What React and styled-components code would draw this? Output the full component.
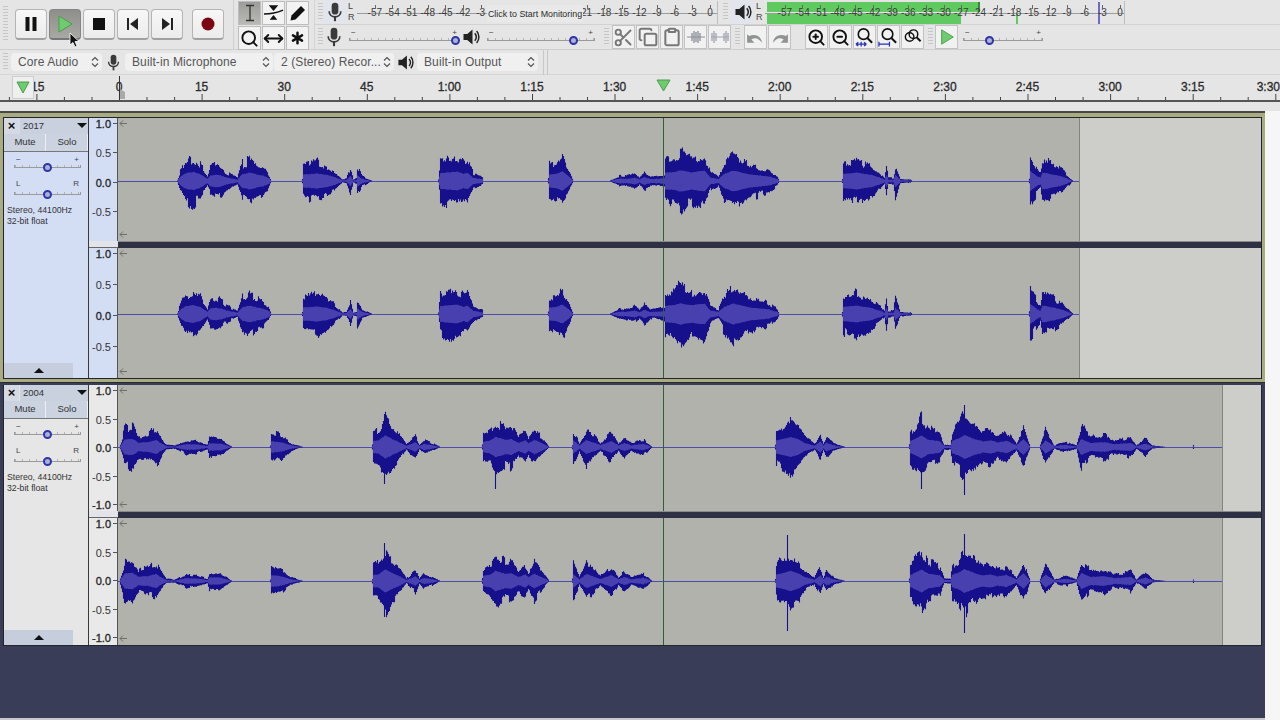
import styled, { createGlobalStyle } from "styled-components";
import { Scissors, Copy, Clipboard, Search, ZoomIn, ZoomOut, Asterisk, MoveHorizontal } from "lucide-react";

const GlobalStyle = createGlobalStyle`
  html, body { margin: 0; padding: 0; height: 100%; overflow: hidden; }
  body { background: #f6f6f6; font-family: "Liberation Sans", Arial, sans-serif; }
  #root { height: 100%; }
`;

const Window = styled.div`
  width: 1280px;
  height: 720px;
  display: flex;
  flex-direction: column;
  background: #e5e5e5;
  overflow: hidden;
`;

const TopBars = styled.div`
  display: flex;
  height: 50px;
  flex: none;
  border-bottom: 1px solid #cfcfcf;
  box-sizing: border-box;
`;

const Grip = styled.div`
  width: 5px;
  height: ${(p) => p.$h || 18}px;
  flex: none;
  margin: ${(p) => p.$m || "0"};
  background: repeating-linear-gradient(to bottom, #c6c6c6 0 1px, transparent 1px 3px);
`;

const TransportBar = styled.div`
  width: 234px;
  flex: none;
  box-sizing: border-box;
  display: flex;
  align-items: center;
  padding: 0 0 1px 3px;
  border-right: 1px solid #d0d0d0;
`;

const TransportBtn = styled.div`
  position: relative;
  width: 32px;
  height: 31px;
  flex: none;
  box-sizing: border-box;
  margin-right: ${(p) => p.$gap || 2}px;
  display: flex;
  align-items: center;
  justify-content: center;
  border-radius: 4px;
  border: 1px solid ${(p) => (p.$down ? "#858585" : "#b4b4b4")};
  border-bottom: 2px solid ${(p) => (p.$down ? "#777" : "#a0a0a0")};
  background: ${(p) =>
    p.$down ? "linear-gradient(#8e8e8a, #a8a8a4)" : "linear-gradient(#f7f7f7, #ececec)"};
`;

const MouseCursor = styled.svg`
  position: absolute;
  left: 19px;
  top: 22px;
  width: 11px;
  height: 16px;
  z-index: 5;
`;

const ToolsBar = styled.div`
  width: 80px;
  flex: none;
  box-sizing: border-box;
  display: grid;
  grid-template-columns: repeat(3, 23px);
  grid-auto-rows: 24px;
  gap: 1px;
  padding: 1px 0 0 4px;
`;

const ToolBtn = styled.div`
  box-sizing: border-box;
  display: flex;
  align-items: center;
  justify-content: center;
  border: 1px solid #bdbdbd;
  background: ${(p) => (p.$on ? "linear-gradient(#9c9c98, #b9b9b5)" : "#f3f3f3")};
`;

const BarStack = styled.div`
  flex: 1;
  display: flex;
  flex-direction: column;
  border-left: 1px solid #d4d4d4;
`;

const MeterRow = styled.div`
  display: flex;
  align-items: center;
  height: 25px;
  flex: none;
  border-bottom: 1px solid #d2d2d2;
  box-sizing: border-box;
`;

const MeterBtn = styled.div`
  width: 23px;
  height: 22px;
  flex: none;
  display: flex;
  align-items: center;
  justify-content: center;
  background: #e3e5ee;
  border-radius: 1px;
`;

const ChannelLetters = styled.div`
  width: 9px;
  flex: none;
  margin-left: 2px;
  font-size: 9px;
  line-height: 11px;
  color: #444;
`;

const MeterScale = styled.div`
  position: relative;
  display: flex;
  width: ${(p) => p.$w}px;
  height: 23px;
  flex: none;
  padding-left: ${(p) => p.$pad}px;
  box-sizing: border-box;
  border-right: 1px solid #bdbdbd;
  background: linear-gradient(#9c9c9c, #9c9c9c) 0 12px / 100% 1px no-repeat;
`;

const MeterFill = styled.div`
  position: absolute;
  left: 2px;
  top: ${(p) => p.$top}px;
  width: ${(p) => p.$w}px;
  height: 10px;
  background: #5fca5f;
  border-right: 2px solid ${(p) => (p.$edge ? "#2f8a2f" : "#5fca5f")};
`;

const PeakMark = styled.div`
  position: absolute;
  left: ${(p) => p.$x}px;
  top: ${(p) => p.$top}px;
  width: 1.5px;
  height: ${(p) => p.$h}px;
  background: ${(p) => p.$color};
`;

const MeterLabel = styled.div`
  position: relative;
  width: 17.65px;
  flex: none;
  text-align: center;
  font-size: 10px;
  line-height: 24px;
  color: #3c3c3c;
  &::before {
    content: "";
    position: absolute;
    left: 50%;
    top: 4px;
    width: 1px;
    height: 4px;
    background: #666;
  }
`;

const MonitorHint = styled.div`
  position: absolute;
  left: ${(p) => p.$x}px;
  top: 4px;
  width: 96px;
  height: 17px;
  text-align: center;
  font-size: 8.9px;
  line-height: 18px;
  white-space: nowrap;
  color: #2a2a2a;
  background: #e9e9e9;
`;

const ControlRow = styled.div`
  display: flex;
  align-items: center;
  height: 24px;
  flex: none;
`;

const IconSlot = styled.div`
  width: ${(p) => p.$w || 20}px;
  flex: none;
  margin: ${(p) => p.$m || "0"};
  display: flex;
  align-items: center;
  justify-content: center;
`;

const SliderBox = styled.div`
  position: relative;
  width: ${(p) => p.$w}px;
  flex: none;
  margin: ${(p) => p.$m || "0"};
`;

const SliderMarks = styled.div`
  display: flex;
  justify-content: space-between;
  padding: 0 2px;
  height: 9px;
  font-size: 8px;
  line-height: 9px;
  color: #444;
`;

const SliderLine = styled.div`
  height: 2px;
  margin-top: ${(p) => (p.$drop ? 4 : 1)}px;
  border-bottom: 1px solid #9a9a9a;
  border-left: 1px solid #9a9a9a;
  border-right: 1px solid #9a9a9a;
  background: repeating-linear-gradient(to right, #b4b4b4 0 1px, transparent 1px 7px);
`;

const SliderThumb = styled.div`
  position: absolute;
  left: ${(p) => p.$at}px;
  bottom: -4px;
  width: 9px;
  height: 9px;
  box-sizing: border-box;
  margin-left: -4.5px;
  border-radius: 50%;
  border: 2.5px solid #2e35a6;
  background: #aab0d8;
`;

const EditBtn = styled.div`
  width: 23px;
  height: 24px;
  flex: none;
  box-sizing: border-box;
  margin-right: 1px;
  display: flex;
  align-items: center;
  justify-content: center;
  border: 1px solid #c2c2c2;
  background: #f1f1f1;
`;

const DeviceBar = styled.div`
  display: flex;
  align-items: center;
  height: 25px;
  flex: none;
  box-sizing: border-box;
  padding-left: 3px;
  border-bottom: 1px solid #d6d6d6;
`;

const DeviceSelect = styled.div`
  width: ${(p) => p.$w}px;
  height: 18px;
  flex: none;
  box-sizing: border-box;
  margin: ${(p) => p.$m || "0"};
  padding: 0 3px 0 7px;
  display: flex;
  align-items: center;
  justify-content: space-between;
  border-radius: 4px;
  background: #f0f0f0;
  font-size: 12px;
  letter-spacing: 0.1px;
  color: #555;
  white-space: nowrap;
`;

const DeviceEnd = styled.div`
  width: 3px;
  height: 25px;
  margin-left: 5px;
  border-left: 1px solid #c8c8c8;
  border-right: 1px solid #c8c8c8;
`;

const TimeRuler = styled.div`
  position: relative;
  display: flex;
  height: 27px;
  flex: none;
  box-sizing: border-box;
  border-bottom: 2px solid #555;
  overflow: hidden;
`;

const RulerTicks = styled.svg`
  position: absolute;
  left: 0;
  top: 0;
`;

const RulerLabel = styled.div`
  flex: none;
  width: ${(p) => p.$w || 82.6}px;
  margin-left: ${(p) => p.$ml || 0}px;
  text-align: ${(p) => (p.$end ? "right" : "center")};
  font-size: 12px;
  line-height: 24px;
  color: #2a2a2a;
  -webkit-text-stroke: 0.3px #2a2a2a;
`;

const TimelineButton = styled.div`
  position: absolute;
  left: 12px;
  top: 1px;
  width: 22px;
  height: 23px;
  box-sizing: border-box;
  display: flex;
  align-items: center;
  justify-content: center;
  background: #efefef;
  border: 1px solid #cdcdcd;
`;

const Playhead = styled.svg`
  position: absolute;
  left: 656px;
  top: 4px;
`;

const RulerGap = styled.div`
  height: 9px;
  flex: none;
`;

const TrackArea = styled.div`
  flex: 1;
  display: flex;
  min-height: 0;
`;

const TrackList = styled.div`
  width: 1265px;
  flex: none;
  display: flex;
  flex-direction: column;
  background: #3a3d58;
  border-top: 2px solid #47474a;
  border-bottom: 2px solid #c9c9cd;
  box-sizing: border-box;
`;

const Gutter = styled.div`
  flex: 1;
  background: #f6f6f6;
`;

const SelectedFrame = styled.div`
  flex: none;
  box-sizing: border-box;
  border: solid #a9ab80;
  border-width: 4px 3px 3px;
  box-shadow: 0 1px 0 #2a2a2a;
`;

const PlainFrame = styled.div`
  flex: none;
  margin: 3px 3px 0;
`;

const TrackBody = styled.div`
  display: flex;
  height: 260px;
  border: 1px solid #24242c;
  border-top-width: ${(p) => (p.$plain ? 0 : 1)}px;
`;

const LabelPanel = styled.div`
  width: 85px;
  flex: none;
  box-sizing: border-box;
  display: flex;
  flex-direction: column;
  border-right: 1px solid #3a3a3a;
  background: ${(p) => (p.$selected ? "#d3def5" : "#e6e6e6")};
`;

const PanelHead = styled.div`
  display: flex;
  height: 16px;
  flex: none;
`;

const CloseBtn = styled.div`
  width: 15px;
  flex: none;
  margin-right: 1px;
  background: #d5d9e3;
  font-size: 13px;
  font-weight: 700;
  line-height: 15px;
  text-align: center;
  color: #111;
`;

const TrackName = styled.div`
  flex: 1;
  display: flex;
  align-items: center;
  justify-content: space-between;
  padding: 0 1px 1px 3px;
  background: #c9d0de;
  font-size: 9.5px;
  color: #333;
`;

const DropArrow = styled.div`
  width: 0;
  height: 0;
  border-left: 5px solid transparent;
  border-right: 5px solid transparent;
  border-top: 5px solid #111;
`;

const PanelBtns = styled.div`
  display: flex;
  height: 17px;
  flex: none;
  border-bottom: 1px solid #777;
`;

const PanelBtn = styled.div`
  flex: 1;
  padding-left: 1px;
  background: #cbd2e0;
  border-right: 1px solid #eef0f4;
  font-size: 9.5px;
  line-height: 16px;
  text-align: center;
  color: #333;
`;

const PanelInfo = styled.div`
  margin: 10px 0 0 3px;
  font-size: 8.7px;
  line-height: 11px;
  color: #333;
  white-space: nowrap;
`;

const PanelSliders = styled.div`
  display: flex;
  flex-direction: column;
  gap: 11px;
  padding: 3px 0 0 10px;
`;

const CollapseBtn = styled.div`
  width: 69px;
  height: 15px;
  flex: none;
  margin-top: auto;
  display: flex;
  align-items: center;
  justify-content: center;
  background: #c6cede;
`;

const CollapseArrow = styled.div`
  width: 0;
  height: 0;
  border-left: 5px solid transparent;
  border-right: 5px solid transparent;
  border-bottom: 5px solid #111;
`;

const Channels = styled.div`
  flex: 1;
  display: flex;
  flex-direction: column;
`;

const ChannelRow = styled.div`
  display: flex;
  height: ${(p) => p.$h}px;
  flex: none;
`;

const AmpScale = styled.div`
  width: 29px;
  flex: none;
  box-sizing: border-box;
  display: flex;
  flex-direction: column;
  justify-content: space-between;
  padding-bottom: ${(p) => p.$pb}px;
  border-right: 1px solid #555;
  background: ${(p) => (p.$selected ? "#d3def5" : "#e9e9e9")};
`;

const AmpLabel = styled.div`
  position: relative;
  height: 12px;
  padding-right: 6px;
  text-align: right;
  font-size: 11px;
  line-height: 12px;
  color: #333;
  -webkit-text-stroke: ${(p) => (p.$strong ? "0.35px #222" : "0")};
  &::after {
    content: "";
    position: absolute;
    right: 0;
    top: 5px;
    width: 4px;
    height: 1px;
    background: #555;
  }
`;

const WaveSvg = styled.svg`
  display: block;
  flex: none;
`;

const ChannelGap = styled.div`
  display: flex;
  height: 7px;
  flex: none;
`;

const GapScale = styled.div`
  width: 29px;
  flex: none;
  box-sizing: border-box;
  background: #e2e4ea;
  border-bottom: 1px solid #666;
`;

const GapBand = styled.div`
  flex: 1;
  background: #2e3044;
  border-top: 1px solid #8a8a8a;
`;

/* ---- waveform data: [x, peak amplitude] key points per clip ---- */
const CLIPS_A = [
  [[177, 1], [180, 14], [185, 26], [193, 30], [200, 22], [207, 7], [210, 18], [216, 21], [221, 18], [226, 11], [237, 4], [242, 23], [250, 28], [256, 22], [263, 17], [268, 10], [271, 0]],
  [[302, 3], [303, 22], [310, 23], [317, 25], [326, 20], [333, 14], [342, 2], [346, 3], [350, 16], [353, 2], [356, 3], [357, 18], [362, 6], [372, 0]],
  [[438, 2], [440, 26], [447, 29], [457, 31], [463, 24], [467, 27], [473, 10], [482, 5], [483, 0]],
  [[548, 3], [549, 21], [556, 24], [562, 32], [568, 16], [573, 0]],
  [[609, 0], [613, 3], [619, 7], [627, 7], [634, 11], [639, 5], [644, 13], [650, 6], [658, 7], [664, 9], [665, 28], [672, 29], [680, 36], [691, 29], [704, 35], [710, 11], [718, 6], [724, 24], [733, 35], [749, 22], [768, 15], [777, 6], [779, 0]],
  [[842, 3], [843, 24], [850, 26], [856, 28], [871, 20], [880, 10], [884, 4], [886, 20], [888, 4], [893, 4], [895, 20], [900, 3], [910, 2], [912, 0]],
  [[1029, 3], [1030, 33], [1037, 15], [1040, 11], [1042, 28], [1052, 22], [1062, 14], [1071, 2], [1073, 0]],
];
const CLIPS_B = [
  [[120, 4], [122, 13], [124, 25], [132, 27], [138, 14], [147, 16], [156, 23], [161, 11], [166, 3], [175, 2], [186, 9], [195, 8], [207, 3], [209, 12], [220, 11], [232, 0]],
  [[270, 2], [271, 19], [281, 15], [291, 5], [303, 0]],
  [[372, 3], [373, 20], [378, 22], [385, 39], [392, 26], [397, 19], [406, 3], [415, 15], [419, 3], [424, 10], [432, 5], [440, 0]],
  [[482, 3], [483, 17], [490, 22], [495, 34], [505, 24], [511, 26], [518, 13], [525, 22], [528, 12], [534, 24], [542, 11], [549, 0]],
  [[572, 3], [573, 22], [579, 5], [586, 23], [600, 6], [611, 19], [618, 5], [624, 13], [631, 5], [643, 10], [652, 0]],
  [[775, 3], [776, 22], [783, 27], [790, 34], [799, 24], [804, 13], [814, 4], [820, 18], [823, 5], [826, 14], [833, 5], [845, 0]],
  [[909, 3], [910, 20], [921, 38], [928, 24], [939, 19], [944, 3], [950, 3], [952, 21], [958, 28], [964, 40], [976, 24], [983, 18], [990, 22], [997, 15], [1006, 20], [1016, 5], [1023, 26], [1030, 0]],
  [[1040, 3], [1045, 21], [1054, 2], [1060, 5], [1066, 6], [1076, 2], [1081, 27], [1090, 13], [1104, 16], [1114, 9], [1130, 13], [1136, 2], [1145, 11], [1152, 2], [1166, 0]],
  [[1192, 0], [1193, 3], [1194, 0]],
];

function buildWave(clips, seed, mid, spikes) {
  let s = seed;
  const rnd = () => {
    s = (s * 16807) % 2147483647;
    return s / 2147483647;
  };
  let peak = "";
  let rms = "";
  let lobeUp = 1;
  let lobeDown = 1;
  let lobeLeft = 0;
  clips.forEach((keys) => {
    for (let k = 0; k < keys.length - 1; k++) {
      const [x0, a0] = keys[k];
      const [x1, a1] = keys[k + 1];
      for (let x = x0; x < x1; x++) {
        if (lobeLeft-- <= 0) {
          lobeUp = 0.62 + 0.38 * rnd();
          lobeDown = 0.62 + 0.38 * rnd();
          lobeLeft = 1 + Math.floor(rnd() * 4);
        }
        const env = a0 + ((a1 - a0) * (x - x0)) / (x1 - x0);
        const up = env * lobeUp * (0.86 + 0.14 * rnd());
        const down = env * lobeDown * (0.86 + 0.14 * rnd());
        peak += `M${x + 0.5} ${(mid - up).toFixed(1)}V${(mid + down).toFixed(1)}`;
        const inner = env * 0.29 + (env > 4 ? rnd() * 0.5 : 0);
        rms += `M${x + 0.5} ${(mid - inner).toFixed(1)}V${(mid + inner).toFixed(1)}`;
      }
    }
  });
  (spikes || []).forEach(([x, a, b]) => {
    peak += `M${x + 0.5} ${mid - a}V${mid + b}`;
  });
  return { peak, rms };
}

function Waveform({ h, mid, clips, seed, end, spikes }) {
  const { peak, rms } = buildWave(clips, seed, mid, spikes);
  return (
    <WaveSvg width="1143" height={h} viewBox={`118 0 1143 ${h}`}>
      <rect x="118" y="0" width={end - 118} height={h} fill="#b2b2ad" />
      <rect x={end} y="0" width={1261 - end} height={h} fill="#cdcec9" />
      <line x1={end + 0.5} x2={end + 0.5} y1="0" y2={h} stroke="#85857f" />
      <line x1="118" x2={end} y1={mid + 0.5} y2={mid + 0.5} stroke="#4c4cae" />
      <g style={{ filter: "blur(0.35px)" }}>
        <path d={peak} stroke="#17108c" strokeWidth="1.1" fill="none" />
        <path d={rms} stroke="#4740ae" strokeWidth="1.1" fill="none" />
      </g>
      <line x1="663.5" x2="663.5" y1="0" y2={h} stroke="#2f5f3c" />
      <path d={`M127 5.5H120M123 2.5L120 5.5L123 8.5M127 ${h - 6.5}H120M123 ${h - 9.5}L120 ${h - 6.5}L123 ${h - 3.5}`} stroke="#6e6e6a" fill="none" />
    </WaveSvg>
  );
}

/* ---- small drawings ---- */
const Mic = ({ size = 20, color = "#3a3a3a" }) => (
  <svg width={size} height={size} viewBox="0 0 24 24">
    <rect x="8" y="1" width="8" height="14" rx="4" fill={color} />
    <path d="M5 11c0 9 14 9 14 0" stroke={color} strokeWidth="2" fill="none" />
    <path d="M12 18v5" stroke={color} strokeWidth="2.5" />
  </svg>
);

const Speaker = ({ size = 18 }) => (
  <svg width={size} height={size} viewBox="0 0 24 24">
    <path d="M2 8h5l7-6v20l-7-6H2z" fill="#222" />
    <path d="M17 7c2.5 3 2.5 7 0 10M19.5 4c4 4.500 4 11.500 0 16" stroke="#222" strokeWidth="2" fill="none" />
  </svg>
);

const Chevrons = () => (
  <svg width="8" height="12" viewBox="0 0 8 12">
    <path d="M1 4.500L4 1.500L7 4.500M1 7.500L4 10.500L7 7.500" stroke="#555" strokeWidth="1.2" fill="none" />
  </svg>
);

const TrimIcon = ({ tone }) => (
  <svg width="20" height="16" viewBox="0 0 20 16">
    <path d="M1 8h18" stroke={tone} strokeWidth="1" />
    <path d="M6 4v8M8 2v12M10 3v10M12 2v12M14 4v8" stroke={tone} strokeWidth="1.3" />
  </svg>
);

const SilenceIcon = ({ tone }) => (
  <svg width="20" height="16" viewBox="0 0 20 16">
    <path d="M1 8h18" stroke={tone} strokeWidth="1" />
    <path d="M2 4v8M4 2v12M6 4v8M14 4v8M16 2v12M18 4v8" stroke={tone} strokeWidth="1.3" />
  </svg>
);

const UndoIcon = ({ flip }) => (
  <svg width="21" height="17" viewBox="0 0 20 16" style={{ transform: flip ? "scaleX(-1)" : "none" }}>
    <path d="M2 5v8h7l-3-3c4-2.500 7-1 10 3 0-5-5-9-12-6.500z" fill="#8f9490" />
  </svg>
);

const FitIcon = ({ wide }) => (
  <svg width="22" height="22" viewBox="0 0 22 22">
    <circle cx="10" cy="8" r="5.500" stroke="#111" strokeWidth="1.700" fill="none" />
    <path d="M14 12l5 5" stroke="#111" strokeWidth="2" />
    {wide ? (
      <path d="M1 18.500h11M1 16v5M12 16v5" stroke="#2430b8" strokeWidth="1.300" fill="none" />
    ) : (
      <path d="M2 18.500h11M2 18.500l2.500-2M2 18.500l2.500 2M13 18.500l-2.500-2M13 18.500l-2.500 2M7.500 16v5" stroke="#2430b8" strokeWidth="1.300" fill="none" />
    )}
  </svg>
);

const ToggleZoomIcon = () => (
  <svg width="22" height="22" viewBox="0 0 22 22">
    <circle cx="8" cy="11" r="4.500" stroke="#111" strokeWidth="1.500" fill="none" />
    <circle cx="12" cy="8" r="4.500" stroke="#111" strokeWidth="1.500" fill="none" />
    <path d="M15.500 11.500l4 4" stroke="#111" strokeWidth="2" />
  </svg>
);

const GreenPlay = ({ size = 20 }) => (
  <svg width={size} height={size} viewBox="0 0 20 20">
    <path d="M4 2l13 8-13 8z" fill="#6fcb6f" stroke="#4c9c4c" strokeWidth="1" />
  </svg>
);

function Slider({ w, at, marks, m, drop }) {
  return (
    <SliderBox $w={w} $m={m}>
      <SliderMarks>
        <span>{marks[0]}</span>
        <span>{marks[1]}</span>
      </SliderMarks>
      <SliderLine $drop={drop} />
      <SliderThumb $at={at} />
    </SliderBox>
  );
}

const SCALE = ["-57", "-54", "-51", "-48", "-45", "-42", "-39", "-36", "-33", "-30", "-27", "-24", "-21", "-18", "-15", "-12", "-9", "-6", "-3", "0"];
// the monitoring hint covers the middle of the recording meter
const REC_SCALE = ["-57", "-54", "-51", "-48", "-45", "-42", "-3", "", "", "", "", "", "21", "-18", "-15", "-12", "-9", "-6", "-3", "0"];
const TIMES = ["0", "15", "30", "45", "1:00", "1:15", "1:30", "1:45", "2:00", "2:15", "2:30", "2:45", "3:00", "3:15"];

const rulerTicks = [];
for (let i = -4; i < 45; i++) {
  const x = 119.5 + i * 27.53;
  const major = i % 3 === 0;
  rulerTicks.push(`M${x.toFixed(1)} ${major ? 19 : 22}V25`);
}

function TrackPanel({ name, selected }) {
  return (
    <LabelPanel $selected={selected}>
      <PanelHead>
        <CloseBtn>×</CloseBtn>
        <TrackName>
          {name}
          <DropArrow />
        </TrackName>
      </PanelHead>
      <PanelBtns>
        <PanelBtn>Mute</PanelBtn>
        <PanelBtn>Solo</PanelBtn>
      </PanelBtns>
      <PanelSliders>
        <Slider w={67} at={33} marks={["−", "+"]} />
        <Slider w={67} at={33} marks={["L", "R"]} drop />
      </PanelSliders>
      <PanelInfo>
        Stereo, 44100Hz
        <br />
        32-bit float
      </PanelInfo>
      <CollapseBtn>
        <CollapseArrow />
      </CollapseBtn>
    </LabelPanel>
  );
}

function Amp({ labels, pb, selected }) {
  return (
    <AmpScale $pb={pb} $selected={selected}>
      {labels.map((t, i) => (
        <AmpLabel key={i} $strong={t !== "0.5" && t !== "-0.5"}>
          {t}
        </AmpLabel>
      ))}
    </AmpScale>
  );
}

export default function App() {
  const short = ["1.0", "0.5", "0.0", "-0.5"];
  const full = ["1.0", "0.5", "0.0", "-0.5", "-1.0"];
  return (
    <Window>
      <GlobalStyle />
      <TopBars>
        <TransportBar>
          <Grip $h={36} $m="0 7px 0 0" />
          <TransportBtn>
            <svg width="18" height="18" viewBox="0 0 18 18">
              <path d="M3.500 2h4v14h-4zM10.500 2h4v14h-4z" fill="#111" />
            </svg>
          </TransportBtn>
          <TransportBtn $down>
            <GreenPlay />
            <MouseCursor viewBox="0 0 11 16">
              <path d="M1 1v12l3-2.500 2 4.500 2-1-2-4.500h4z" fill="#111" stroke="#fff" strokeWidth="0.8" />
            </MouseCursor>
          </TransportBtn>
          <TransportBtn>
            <svg width="14" height="14" viewBox="0 0 14 14">
              <rect x="1" y="1" width="12" height="12" fill="#111" />
            </svg>
          </TransportBtn>
          <TransportBtn>
            <svg width="14" height="14" viewBox="0 0 14 14">
              <path d="M1 1h2v12H1zM12 1v12L4 7z" fill="#222" />
            </svg>
          </TransportBtn>
          <TransportBtn $gap={9}>
            <svg width="14" height="14" viewBox="0 0 14 14">
              <path d="M11 1h2v12h-2zM2 1v12l8-6z" fill="#222" />
            </svg>
          </TransportBtn>
          <TransportBtn>
            <svg width="16" height="16" viewBox="0 0 16 16">
              <circle cx="8" cy="8" r="6.500" fill="#7c0712" />
            </svg>
          </TransportBtn>
        </TransportBar>
        <ToolsBar>
          <ToolBtn $on>
            <svg width="14" height="18" viewBox="0 0 14 18">
              <path d="M3 1.500h8M3 16.500h8M7 1.500v15" stroke="#333" strokeWidth="1.300" fill="none" />
            </svg>
          </ToolBtn>
          <ToolBtn>
            <svg width="22" height="20" viewBox="0 0 22 20">
              <path d="M1 11c7 0 13-1 20-4" stroke="#111" strokeWidth="1.600" fill="none" />
              <path d="M6 2h10l-5 6zM7 17h8l-4-5z" fill="#111" />
            </svg>
          </ToolBtn>
          <ToolBtn>
            <svg width="18" height="18" viewBox="0 0 18 18">
              <path d="M1.500 16.500l1-5L12 2l4 4-9.500 9.500z" fill="#111" />
            </svg>
          </ToolBtn>
          <ToolBtn>
            <Search size={19} color="#111" strokeWidth={2.4} />
          </ToolBtn>
          <ToolBtn>
            <MoveHorizontal size={21} color="#111" strokeWidth={2.2} />
          </ToolBtn>
          <ToolBtn>
            <Asterisk size={22} color="#111" strokeWidth={2.8} />
          </ToolBtn>
        </ToolsBar>
        <BarStack>
          <MeterRow>
            <Grip $m="0 0 0 3px" />
            <MeterBtn>
              <Mic />
            </MeterBtn>
            <ChannelLetters>
              L
              <br />R
            </ChannelLetters>
            <MeterScale $w={361} $pad={9}>
              {REC_SCALE.map((t, i) => (
                <MeterLabel key={i}>{t}</MeterLabel>
              ))}
              <MonitorHint $x={130}>Click to Start Monitoring</MonitorHint>
            </MeterScale>
            <Grip $m="0 3px 0 5px" />
            <MeterBtn>
              <Speaker />
            </MeterBtn>
            <ChannelLetters>
              L
              <br />R
            </ChannelLetters>
            <MeterScale $w={360} $pad={11}>
              <MeterFill $top={1} $w={211} $edge />
              <MeterFill $top={13} $w={192} />
              <PeakMark $x={251} $top={13} $h={10} $color="#5fca5f" />
              <PeakMark $x={333} $top={1} $h={22} $color="#6c6cc4" />
              {SCALE.map((t) => (
                <MeterLabel key={t}>{t}</MeterLabel>
              ))}
            </MeterScale>
          </MeterRow>
          <ControlRow>
            <Grip $m="0 0 0 3px" />
            <IconSlot $w={20} $m="0 0 0 1px">
              <Mic />
            </IconSlot>
            <Slider w={110} at={106} marks={["−", "+"]} m="0 0 5px 5px" />
            <IconSlot $w={18} $m="0 7px 0 3px">
              <Speaker />
            </IconSlot>
            <Slider w={108} at={86} marks={["−", "+"]} m="0 0 5px 0" />
            <Grip $m="0 3px 0 9px" />
            <EditBtn>
              <Scissors size={21} color="#777" strokeWidth={2.2} />
            </EditBtn>
            <EditBtn>
              <Copy size={20} color="#777" strokeWidth={2.4} />
            </EditBtn>
            <EditBtn>
              <Clipboard size={20} color="#777" strokeWidth={2.4} />
            </EditBtn>
            <EditBtn>
              <TrimIcon tone="#8a8f98" />
            </EditBtn>
            <EditBtn>
              <SilenceIcon tone="#a0a4ae" />
            </EditBtn>
            <Grip $m="0 4px 0 3px" />
            <EditBtn>
              <UndoIcon />
            </EditBtn>
            <EditBtn>
              <UndoIcon flip />
            </EditBtn>
            <IconSlot $w={13} />
            <EditBtn>
              <ZoomIn size={19} color="#111" strokeWidth={2.4} />
            </EditBtn>
            <EditBtn>
              <ZoomOut size={19} color="#111" strokeWidth={2.4} />
            </EditBtn>
            <EditBtn>
              <FitIcon />
            </EditBtn>
            <EditBtn>
              <FitIcon wide />
            </EditBtn>
            <EditBtn>
              <ToggleZoomIcon />
            </EditBtn>
            <Grip $m="0 2px 0 3px" />
            <EditBtn>
              <GreenPlay size={18} />
            </EditBtn>
            <Slider w={80} at={26} marks={["−", "+"]} m="0 0 5px 4px" />
          </ControlRow>
        </BarStack>
      </TopBars>
      <DeviceBar>
        <Grip $m="0 3px 0 0" />
        <DeviceSelect $w={91}>
          Core Audio
          <Chevrons />
        </DeviceSelect>
        <IconSlot $w={23}>
          <Mic size={17} />
        </IconSlot>
        <DeviceSelect $w={148}>
          Built-in Microphone
          <Chevrons />
        </DeviceSelect>
        <DeviceSelect $w={120} $m="0 0 0 1px">
          2 (Stereo) Recor...
          <Chevrons />
        </DeviceSelect>
        <IconSlot $w={23}>
          <Speaker size={17} />
        </IconSlot>
        <DeviceSelect $w={121}>
          Built-in Output
          <Chevrons />
        </DeviceSelect>
        <DeviceEnd />
      </DeviceBar>
      <TimeRuler>
        <RulerTicks width="1280" height="25" viewBox="0 0 1280 25">
          <path d={rulerTicks.join("")} stroke="#444" fill="none" />
          <path d="M119.500 1V25" stroke="#333" />
          <path d="M120 14l5 3v7h-5z" fill="#a9a9a9" />
        </RulerTicks>
        <RulerLabel $ml={-2.4} $w={80.1}>
          15
        </RulerLabel>
        {TIMES.map((t) => (
          <RulerLabel key={t}>{t}</RulerLabel>
        ))}
        <RulerLabel $w={46} $end>
          3:30
        </RulerLabel>
        <TimelineButton>
          <svg width="14" height="13" viewBox="0 0 14 13">
            <path d="M1 1h12L7 12z" fill="#6fcb6f" stroke="#4c9c4c" />
          </svg>
        </TimelineButton>
        <Playhead width="15" height="13" viewBox="0 0 15 13">
          <path d="M1 1h13L7.500 12z" fill="#6fcb6f" stroke="#4c9c4c" />
        </Playhead>
      </TimeRuler>
      <RulerGap />
      <TrackArea>
        <TrackList>
          <SelectedFrame>
            <TrackBody>
              <TrackPanel name="2017" selected />
              <Channels>
                <ChannelRow $h={123}>
                  <Amp labels={short} pb={23} selected />
                  <Waveform h={123} mid={63} clips={CLIPS_A} seed={11} end={1079} />
                </ChannelRow>
                <ChannelGap>
                  <GapScale />
                  <GapBand />
                </ChannelGap>
                <ChannelRow $h={130}>
                  <Amp labels={short} pb={25} selected />
                  <Waveform h={130} mid={66} clips={CLIPS_A} seed={57} end={1079} />
                </ChannelRow>
              </Channels>
            </TrackBody>
          </SelectedFrame>
          <PlainFrame>
            <TrackBody $plain>
              <TrackPanel name="2004" />
              <Channels>
                <ChannelRow $h={126}>
                  <Amp labels={full} pb={0} />
                  <Waveform
                    h={126}
                    mid={62}
                    clips={CLIPS_B}
                    seed={23}
                    end={1222}
                    spikes={[[495, 20, 42], [384, 30, 37], [964, 42, 48], [921, 30, 42]]}
                  />
                </ChannelRow>
                <ChannelGap>
                  <GapScale />
                  <GapBand />
                </ChannelGap>
                <ChannelRow $h={127}>
                  <Amp labels={full} pb={1} />
                  <Waveform
                    h={127}
                    mid={63}
                    clips={CLIPS_B}
                    seed={91}
                    end={1222}
                    spikes={[[787, 46, 50], [964, 47, 52], [384, 38, 36]]}
                  />
                </ChannelRow>
              </Channels>
            </TrackBody>
          </PlainFrame>
        </TrackList>
        <Gutter />
      </TrackArea>
    </Window>
  );
}
